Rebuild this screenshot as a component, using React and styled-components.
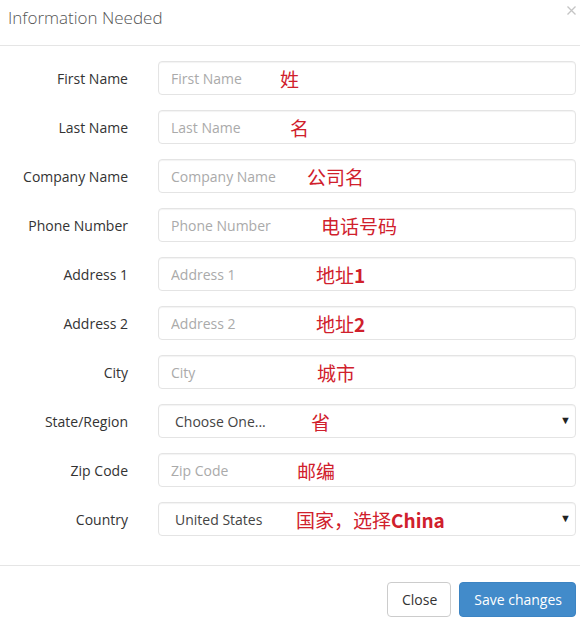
import React from "react";
import styled, { createGlobalStyle } from "styled-components";

// *** Global ***

const GlobalStyle = createGlobalStyle`
  * {
    box-sizing: border-box;
  }
  body {
    margin: 0;
    background: #fff;
    font-family: "Open Sans", "Noto Sans", sans-serif;
    color: #333;
  }
`;

// *** Styled components ***

const Modal = styled.div`
  width: 580px;
  height: 617px;
  overflow: hidden;
  background: #fff;
`;

const Header = styled.div`
  display: flex;
  justify-content: space-between;
  align-items: flex-start;
  height: 46px;
  padding: 5px 4px 0 8px;
  border-bottom: 1px solid #e5e5e5;
`;

const Title = styled.h4`
  margin: 0;
  font-size: 17px;
  font-weight: 300;
  color: #555;
  line-height: 26px;
`;

const CloseX = styled.button`
  display: flex;
  padding: 1px 0 0;
  border: none;
  background: none;
  cursor: pointer;
`;

const Body = styled.form`
  display: flex;
  flex-direction: column;
  gap: 15px;
  padding: 15px 4px 29px 0;
  border-bottom: 1px solid #e5e5e5;
`;

const Row = styled.div`
  display: grid;
  grid-template-columns: 128px 1fr;
  column-gap: 30px;
  align-items: center;
`;

const Label = styled.label`
  text-align: right;
  font-size: 14px;
  color: #333;
`;

const Field = styled.div`
  position: relative;
  height: 34px;
`;

const Input = styled.input`
  width: 100%;
  height: 34px;
  padding: 0 12px;
  font-family: "Open Sans", "Noto Sans", sans-serif;
  font-size: 14px;
  color: #555;
  border: 1px solid #e4e4e4;
  border-radius: 4px;
  box-shadow: inset 0 1px 1px rgba(0, 0, 0, 0.05);
  outline: none;

  &::placeholder {
    color: #aaa;
  }
`;

const Select = styled.select`
  width: 100%;
  height: 34px;
  padding: 0 16px;
  font-family: "Open Sans", "Noto Sans", sans-serif;
  font-size: 14px;
  color: #444;
  background: #fff;
  border: 1px solid #e4e4e4;
  border-radius: 4px;
  box-shadow: inset 0 1px 1px rgba(0, 0, 0, 0.05);
  appearance: none;
  outline: none;
`;

const Caret = styled.span`
  position: absolute;
  right: 5px;
  top: 8px;
  font-size: 11px;
  color: #222;
  pointer-events: none;
`;

const Note = styled.span`
  position: absolute;
  top: 50%;
  transform: translateY(-50%);
  font-family: "Noto Sans CJK SC", "Noto Sans", sans-serif;
  font-size: 19px;
  font-weight: 400;
  color: #d0202c;
  white-space: nowrap;
  pointer-events: none;

  b {
    font-weight: 700;
  }
`;

const Footer = styled.div`
  display: flex;
  justify-content: flex-end;
  gap: 8px;
  padding: 16px 4px 0 0;
`;

const Button = styled.button`
  height: 35px;
  padding: 0 13px 0 14px;
  font-family: "Open Sans", "Noto Sans", sans-serif;
  font-size: 14px;
  border-radius: 4px;
  cursor: pointer;
  color: ${(p) => (p.primary ? "#fff" : "#333")};
  background: ${(p) => (p.primary ? "#428bca" : "#fff")};
  border: 1px solid ${(p) => (p.primary ? "#3c84c3" : "#ccc")};
`;

// *** Data ***

const fields = [
  { label: "First Name", note: "姓", at: 122 },
  { label: "Last Name", note: "名", at: 132 },
  { label: "Company Name", note: "公司名", at: 149 },
  { label: "Phone Number", note: "电话号码", at: 163 },
  { label: "Address 1", note: <>地址<b>1</b></>, at: 158 },
  { label: "Address 2", note: <>地址<b>2</b></>, at: 158 },
  { label: "City", note: "城市", at: 159 },
  { label: "State/Region", select: "Choose One...", note: "省", at: 153 },
  { label: "Zip Code", note: "邮编", at: 139 },
  {
    label: "Country",
    select: "United States",
    note: <>国家，选择<b>China</b></>,
    at: 138,
  },
];

// *** App ***

export default function App() {
  return (
    <>
      <GlobalStyle />
      <Modal>
        <Header>
          <Title>Information Needed</Title>
          <CloseX type="button" aria-label="Close">
            <svg width="9" height="9" viewBox="0 0 9 9">
              <path
                d="M0.5 0.5 L8.5 8.5 M8.5 0.5 L0.5 8.5"
                stroke="#c4c4c4"
                strokeWidth="1.3"
              />
            </svg>
          </CloseX>
        </Header>

        <Body>
          {fields.map((f) => (
            <Row key={f.label}>
              <Label>{f.label}</Label>
              <Field>
                {f.select ? (
                  <>
                    <Select defaultValue={f.select}>
                      <option>{f.select}</option>
                    </Select>
                    <Caret>▼</Caret>
                  </>
                ) : (
                  <Input placeholder={f.label} />
                )}
                <Note style={{ left: f.at }}>{f.note}</Note>
              </Field>
            </Row>
          ))}
        </Body>

        <Footer>
          <Button type="button">Close</Button>
          <Button type="button" primary>
            Save changes
          </Button>
        </Footer>
      </Modal>
    </>
  );
}
